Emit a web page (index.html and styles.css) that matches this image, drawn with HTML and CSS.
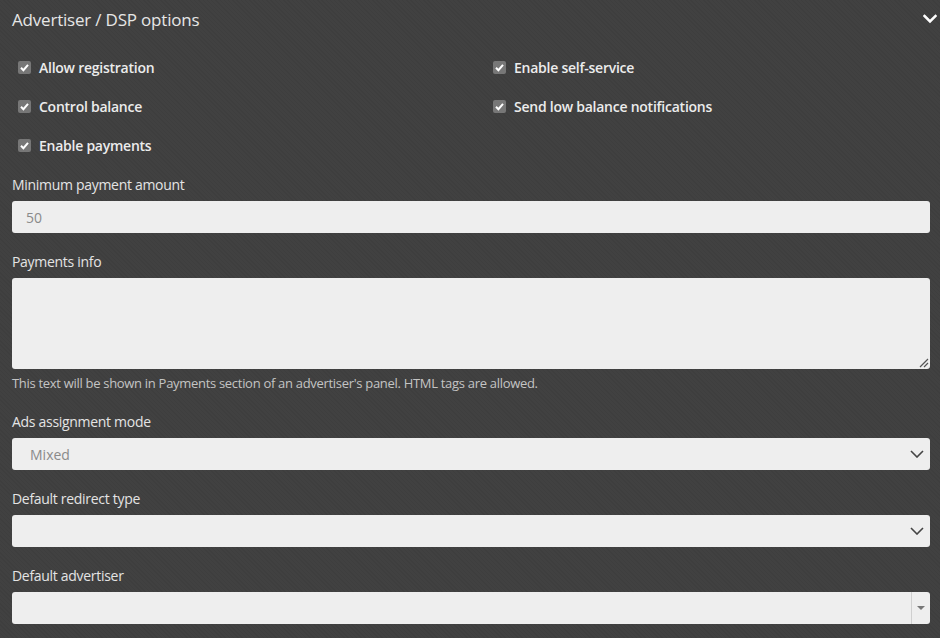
FILE: index.html
```html
<!DOCTYPE html>
<html lang="en">
<head>
<meta charset="utf-8">
<title>Advertiser / DSP options</title>
<link rel="stylesheet" href="styles.css">
</head>
<body>
<section class="panel">
  <header class="panel-head">
    <h2 class="panel-title">Advertiser / DSP options</h2>
    <svg class="collapse-icon" viewBox="0 0 14 10" width="14" height="10"><path d="M1.5 2 L7 7.5 L12.5 2" fill="none" stroke="#fff" stroke-width="2.6" stroke-linecap="square"/></svg>
  </header>
  <div class="panel-body">
    <div class="checks">
      <label class="check"><span class="box"><svg viewBox="0 0 13 13" width="13" height="13"><path d="M3 6.8 L5.4 9.2 L10 3.8" fill="none" stroke="#fff" stroke-width="2"/></svg></span>Allow registration</label>
      <label class="check"><span class="box"><svg viewBox="0 0 13 13" width="13" height="13"><path d="M3 6.8 L5.4 9.2 L10 3.8" fill="none" stroke="#fff" stroke-width="2"/></svg></span>Enable self-service</label>
      <label class="check"><span class="box"><svg viewBox="0 0 13 13" width="13" height="13"><path d="M3 6.8 L5.4 9.2 L10 3.8" fill="none" stroke="#fff" stroke-width="2"/></svg></span>Control balance</label>
      <label class="check"><span class="box"><svg viewBox="0 0 13 13" width="13" height="13"><path d="M3 6.8 L5.4 9.2 L10 3.8" fill="none" stroke="#fff" stroke-width="2"/></svg></span>Send low balance notifications</label>
      <label class="check"><span class="box"><svg viewBox="0 0 13 13" width="13" height="13"><path d="M3 6.8 L5.4 9.2 L10 3.8" fill="none" stroke="#fff" stroke-width="2"/></svg></span>Enable payments</label>
    </div>

    <div class="group">
      <div class="label">Minimum payment amount</div>
      <div class="field"><span class="value">50</span></div>
    </div>

    <div class="group has-help">
      <div class="label">Payments info</div>
      <div class="field area">
        <svg class="grip" viewBox="0 0 10 10" width="10" height="10"><path d="M1 9 L9 1 M5 9 L9 5" stroke="#555" stroke-width="1.2"/></svg>
      </div>
      <div class="help">This text will be shown in Payments section of an advertiser's panel. HTML tags are allowed.</div>
    </div>

    <div class="group">
      <div class="label">Ads assignment mode</div>
      <div class="field select"><span class="value sel">Mixed</span>
        <svg class="chev" viewBox="0 0 14 8" width="14" height="8"><path d="M1 1 L7 7 L13 1" fill="none" stroke="#444" stroke-width="1.6"/></svg>
      </div>
    </div>

    <div class="group">
      <div class="label">Default redirect type</div>
      <div class="field select"><span class="value sel"></span>
        <svg class="chev" viewBox="0 0 14 8" width="14" height="8"><path d="M1 1 L7 7 L13 1" fill="none" stroke="#444" stroke-width="1.6"/></svg>
      </div>
    </div>

    <div class="group">
      <div class="label">Default advertiser</div>
      <div class="field select2"><span class="s2-text"></span><span class="s2-arrow"><span class="tri"></span></span></div>
    </div>
  </div>
</section>
</body>
</html>
```

FILE: styles.css
```css
html, body {
  margin: 0;
  padding: 0;
}
body {
  background-color: #414141;
  background-image: repeating-linear-gradient(45deg, rgba(0,0,0,0.05) 0 1px, transparent 1px 3px);
  font-family: "Open Sans", "Liberation Sans", sans-serif;
  color: #e8e8e8;
  width: 940px;
  height: 638px;
  overflow: hidden;
}
.panel-head {
  display: flex;
  align-items: center;
  justify-content: space-between;
  height: 38px;
  padding: 0 3px 0 12px;
}
.panel-title {
  margin: 0;
  font-weight: 400;
  font-size: 17px;
  color: #e6e6e6;
  letter-spacing: -0.2px;
}
.panel-body {
  padding: 0 10px 0 12px;
}
.checks {
  display: grid;
  grid-template-columns: 475px 1fr;
  row-gap: 19px;
  padding-top: 19px;
  margin-bottom: 20px;
}
.check {
  display: flex;
  align-items: center;
  height: 20px;
  padding-left: 6px;
  font-size: 14px;
  font-weight: 600;
  color: #ececec;
  letter-spacing: -0.25px;
}
.box {
  display: flex;
  width: 13px;
  height: 13px;
  border-radius: 2px;
  background: #777;
  margin-right: 8px;
}
.group {
  margin-bottom: 19px;
}
.group.has-help {
  margin-bottom: 20px;
}
.label {
  height: 20px;
  line-height: 20px;
  font-size: 14px;
  color: #e4e4e4;
  margin-bottom: 6px;
  letter-spacing: -0.3px;
}
.field {
  position: relative;
  height: 32px;
  background: #eeeeee;
  border-radius: 3px;
  display: flex;
  align-items: center;
  box-sizing: border-box;
}
.value {
  padding-left: 14px;
  font-size: 14px;
  color: #8a8a8a;
}
.value.sel {
  padding-left: 18px;
}
.area {
  height: 91px;
}
.grip {
  position: absolute;
  right: 1px;
  bottom: 1px;
}
.help {
  margin-top: 5px;
  height: 18px;
  line-height: 18px;
  font-size: 13px;
  color: #c4c4c4;
  letter-spacing: -0.3px;
}
.chev {
  position: absolute;
  right: 6px;
  top: 12px;
}
.s2-text {
  flex: 1;
}
.s2-arrow {
  width: 18px;
  height: 32px;
  border-left: 1px solid #cfcfcf;
  display: flex;
  align-items: center;
  justify-content: center;
}
.tri {
  width: 0;
  height: 0;
  border-left: 4px solid transparent;
  border-right: 4px solid transparent;
  border-top: 4px solid #777;
}
```
